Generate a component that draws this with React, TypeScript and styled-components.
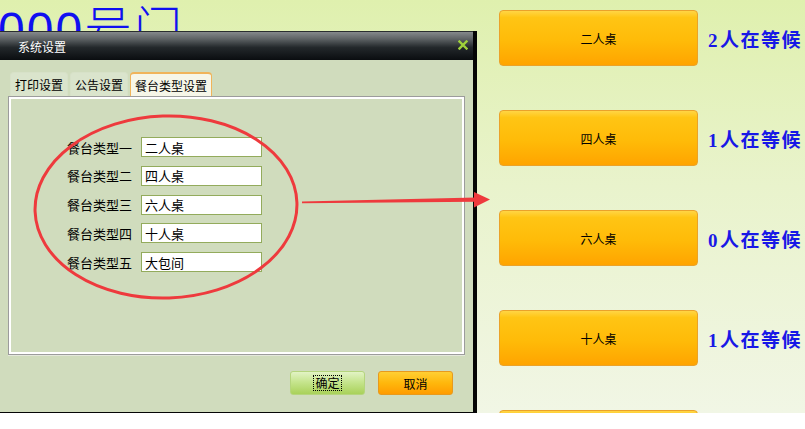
import styled, { createGlobalStyle } from "styled-components";

const GlobalStyle = createGlobalStyle`
  html, body {
    margin: 0;
    padding: 0;
    background: #ffffff;
    font-family: "Noto Sans CJK SC", "Liberation Sans", sans-serif;
  }
`;

const tables = [
  { name: "二人桌", waiting: 2 },
  { name: "四人桌", waiting: 1 },
  { name: "六人桌", waiting: 0 },
  { name: "十人桌", waiting: 1 },
  { name: "大包间", waiting: 0 },
];

const fields = ["一", "二", "三", "四", "五"];

const App = () => {
  return (
    <>
      <GlobalStyle />
      <Page>
        <LeftArea>
          <Heading>000号门</Heading>
        </LeftArea>
        <RightColumn>
          {tables.map((t) => (
            <TableRow key={t.name}>
              <TableButton>{t.name}</TableButton>
              <Waiting>
                <Num>{t.waiting}</Num>人在等候
              </Waiting>
            </TableRow>
          ))}
        </RightColumn>

        <Dialog>
          <TitleBar>
            <Title>系统设置</Title>
            <CloseIcon width="10" height="10" viewBox="0 0 10 10">
              <path
                d="M1.5 1.5 L8.5 8.5 M8.5 1.5 L1.5 8.5"
                stroke="#9fd23a"
                strokeWidth="2.4"
                strokeLinecap="square"
              />
            </CloseIcon>
          </TitleBar>
          <DialogBody>
            <Tabs>
              <Tab>打印设置</Tab>
              <Tab>公告设置</Tab>
              <Tab $active>餐台类型设置</Tab>
            </Tabs>
            <Panel>
              <Form>
                {fields.map((f, i) => (
                  <FieldRow key={f}>
                    <Label>餐台类型{f}</Label>
                    <Input defaultValue={tables[i].name} />
                  </FieldRow>
                ))}
              </Form>
            </Panel>
            <Buttons>
              <OkButton>
                <Focus>确定</Focus>
              </OkButton>
              <CancelButton>取消</CancelButton>
            </Buttons>
          </DialogBody>
        </Dialog>

        <Annotation width="805" height="413" viewBox="0 0 805 413">
          <ellipse
            cx="166"
            cy="207"
            rx="131"
            ry="91"
            fill="none"
            stroke="#ee3a3d"
            strokeWidth="3"
            transform="rotate(-2 166 207)"
          />
          <polygon
            points="302,201.6 476,197.4 476,201.8 302,203.2"
            fill="#ee3a3d"
          />
          <polygon points="474,192 490,199.5 474,207.5" fill="#ee3a3d" />
        </Annotation>
      </Page>
    </>
  );
};

const Page = styled.div`
  position: relative;
  display: flex;
  height: 413px;
  overflow: hidden;
  background: linear-gradient(180deg, #dff0ae 0%, #e9f3cc 45%, #f1f6e5 100%);
`;

const LeftArea = styled.div`
  width: 499px;
  flex: none;
`;

const Heading = styled.div`
  margin: 6px 0 0 -2px;
  font-family: "Liberation Sans", "Noto Sans CJK SC", sans-serif;
  font-size: 48px;
  line-height: 48px;
  font-weight: 300;
  color: #1010f0;
  letter-spacing: 2px;
  white-space: nowrap;
`;

const RightColumn = styled.div`
  display: flex;
  flex-direction: column;
  gap: 44px;
  padding-top: 10px;
`;

const TableRow = styled.div`
  display: flex;
  align-items: center;
  gap: 10px;
  height: 56px;
  flex: none;
`;

const TableButton = styled.div`
  box-sizing: border-box;
  width: 199px;
  height: 56px;
  flex: none;
  display: flex;
  align-items: center;
  justify-content: center;
  border: 1px solid #eaa22a;
  border-radius: 4px;
  background: linear-gradient(
    180deg,
    #ffd545 0%,
    #ffc514 12%,
    #ffbb08 55%,
    #ffa400 100%
  );
  font-size: 12px;
  color: #000;
`;

const Waiting = styled.div`
  white-space: nowrap;
  font-family: "Liberation Serif", "Noto Sans CJK SC", serif;
  font-size: 19px;
  font-weight: bold;
  color: #1818e6;
  letter-spacing: 1.5px;
`;

const Num = styled.span`
  margin-right: 1px;
`;

const Dialog = styled.div`
  position: absolute;
  left: 0;
  top: 31px;
  width: 477px;
  height: 383px;
  box-sizing: border-box;
  display: flex;
  flex-direction: column;
  border-right: 4px solid #050505;
  border-bottom: 2px solid #050505;
  background: #d0dcbd;
`;

const TitleBar = styled.div`
  height: 29px;
  flex: none;
  display: flex;
  align-items: center;
  justify-content: space-between;
  padding: 0 5px 0 18px;
  border-top: 1px solid #2a2e30;
  box-sizing: border-box;
  background: linear-gradient(
    180deg,
    #85898b 0%,
    #5d6264 25%,
    #23282b 55%,
    #0a0d10 100%
  );
`;

const Title = styled.div`
  font-size: 12px;
  color: #ffffff;
`;

const CloseIcon = styled.svg`
  display: block;
  margin-top: -2px;
`;

const DialogBody = styled.div`
  flex: 1;
  display: flex;
  flex-direction: column;
  padding: 12px 8px 0 8px;
`;

const Tabs = styled.div`
  display: flex;
  gap: 2px;
  padding-left: 2px;
  height: 24px;
`;

const Tab = styled.div<{ $active?: boolean }>`
  box-sizing: border-box;
  height: 24px;
  padding: 0 4px;
  display: flex;
  align-items: center;
  font-size: 12px;
  color: #000;
  border-radius: 4px 4px 0 0;
  border: 1px solid ${(p) => (p.$active ? "#f0b45a" : "#d7e1c8")};
  border-bottom: none;
  background: ${(p) => (p.$active ? "#f6f6e8" : "#dae4cc")};
  ${(p) => p.$active && "border-top-width: 2px;"}
`;

const Panel = styled.div`
  height: 259px;
  box-sizing: border-box;
  border: 1px solid #9c9c9c;
  box-shadow: inset 0 0 0 2px #ffffff, 0 1px 0 #e4e8dc;
  padding: 40px 0 0 58px;
`;

const Form = styled.div`
  display: flex;
  flex-direction: column;
  gap: 8.75px;
`;

const FieldRow = styled.div`
  display: flex;
  align-items: center;
  gap: 9px;
  height: 20px;
`;

const Label = styled.div`
  width: 65px;
  font-size: 13px;
  color: #000;
  white-space: nowrap;
`;

const Input = styled.input`
  box-sizing: border-box;
  width: 121px;
  height: 20px;
  margin: 0;
  padding: 0 3px;
  border: 1px solid #93ab5c;
  background: #ffffff;
  font-family: "Noto Sans CJK SC", sans-serif;
  font-size: 13px;
  color: #000;
  outline: none;
`;

const Buttons = styled.div`
  display: flex;
  justify-content: flex-end;
  gap: 13px;
  padding: 16px 12px 0 0;
`;

const BaseButton = styled.div`
  box-sizing: border-box;
  width: 75px;
  height: 24px;
  display: flex;
  align-items: center;
  justify-content: center;
  border-radius: 3px;
  font-size: 12px;
  color: #000;
`;

const OkButton = styled(BaseButton)`
  border: 1px solid #b5d57d;
  background: linear-gradient(180deg, #e2f3c4 0%, #c6e58e 45%, #a9d15a 100%);
`;

const CancelButton = styled(BaseButton)`
  border: 1px solid #e79a1e;
  background: linear-gradient(180deg, #ffcf33 0%, #ffb70c 50%, #ff9c00 100%);
`;

const Focus = styled.span`
  border: 1px dotted #000;
  padding: 0 1px;
  line-height: 14px;
`;

const Annotation = styled.svg`
  position: absolute;
  left: 0;
  top: 0;
  pointer-events: none;
`;

export default App;
